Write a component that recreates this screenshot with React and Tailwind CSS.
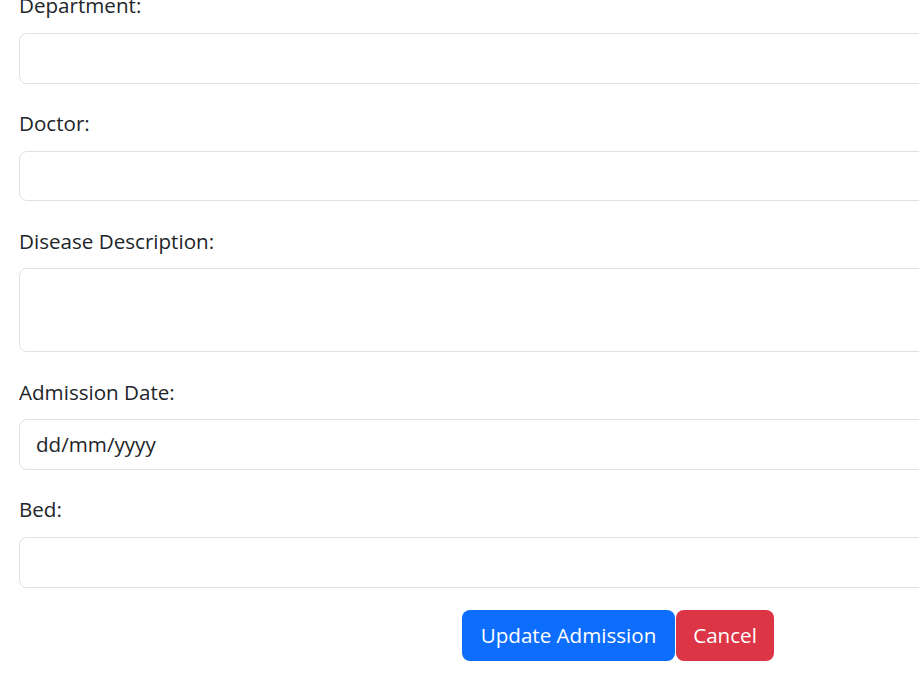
import React from 'react';

const Field = ({ label, last, children }) => (
  <div className={last ? '' : 'mb-[21.33px]'}>
    <label className="block pt-[2px] mb-[11.67px] leading-[32px]">{label}</label>
    {children}
  </div>
);

const inputCls =
  'block w-full h-[50.67px] px-[16px] bg-white border border-[#dee2e6] rounded-[8px] text-[#212529] outline-none';

export default function App() {
  return (
    <div
      className="h-[698px] overflow-hidden bg-white text-[#212529] text-[20.6px]"
      style={{ fontFamily: '"Open Sans", "Noto Sans", sans-serif' }}
    >
      <form className="ml-[19px] w-[1198px] mt-[-12.67px]">
        <Field label="Department:">
          <input type="text" className={inputCls} />
        </Field>
        <Field label="Doctor:">
          <input type="text" className={inputCls} />
        </Field>
        <Field label="Disease Description:">
          <textarea className="block w-full h-[84px] px-[16px] py-[6px] bg-white border border-[#dee2e6] rounded-[8px] resize-none outline-none" />
        </Field>
        <Field label="Admission Date:">
          <div className={inputCls + ' flex items-center'}>dd/mm/yyyy</div>
        </Field>
        <Field label="Bed:" last>
          <input type="text" className={inputCls} />
        </Field>
        <div className="flex justify-center mt-[22.33px]">
          <button type="button" className="h-[51px] w-[213px] bg-[#0d6efd] text-white rounded-[8px]">
            Update Admission
          </button>
          <button type="button" className="h-[51px] w-[98px] ml-[1px] bg-[#dc3545] text-white rounded-[8px]">
            Cancel
          </button>
        </div>
      </form>
    </div>
  );
}
